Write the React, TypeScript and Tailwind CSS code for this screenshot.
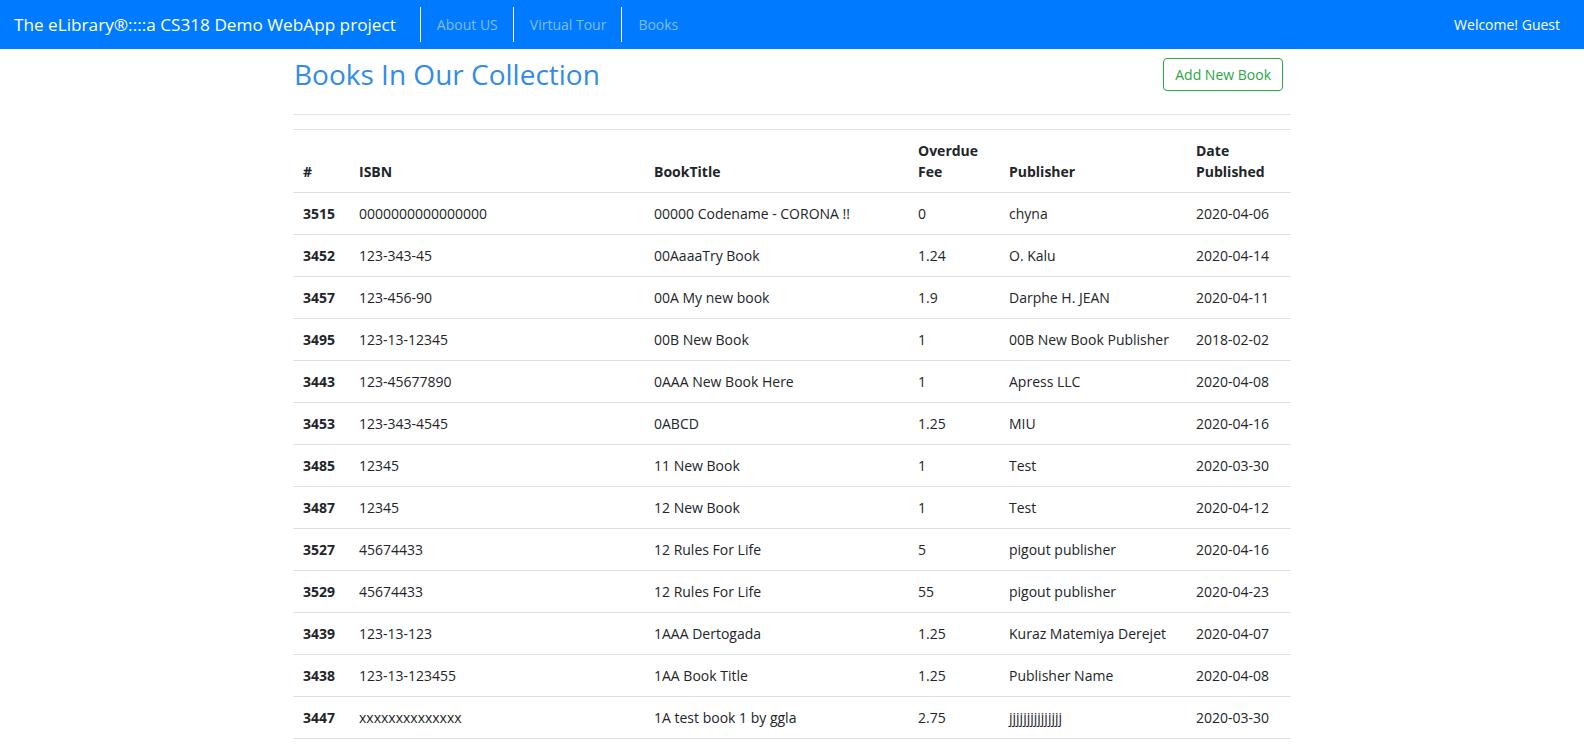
import React from "react";

type Book = {
  id: number;
  isbn: string;
  title: string;
  fee: string;
  publisher: string;
  date: string;
};

const books: Book[] = [
  { id: 3515, isbn: "0000000000000000", title: "00000 Codename - CORONA !!", fee: "0", publisher: "chyna", date: "2020-04-06" },
  { id: 3452, isbn: "123-343-45", title: "00AaaaTry Book", fee: "1.24", publisher: "O. Kalu", date: "2020-04-14" },
  { id: 3457, isbn: "123-456-90", title: "00A My new book", fee: "1.9", publisher: "Darphe H. JEAN", date: "2020-04-11" },
  { id: 3495, isbn: "123-13-12345", title: "00B New Book", fee: "1", publisher: "00B New Book Publisher", date: "2018-02-02" },
  { id: 3443, isbn: "123-45677890", title: "0AAA New Book Here", fee: "1", publisher: "Apress LLC", date: "2020-04-08" },
  { id: 3453, isbn: "123-343-4545", title: "0ABCD", fee: "1.25", publisher: "MIU", date: "2020-04-16" },
  { id: 3485, isbn: "12345", title: "11 New Book", fee: "1", publisher: "Test", date: "2020-03-30" },
  { id: 3487, isbn: "12345", title: "12 New Book", fee: "1", publisher: "Test", date: "2020-04-12" },
  { id: 3527, isbn: "45674433", title: "12 Rules For Life", fee: "5", publisher: "pigout publisher", date: "2020-04-16" },
  { id: 3529, isbn: "45674433", title: "12 Rules For Life", fee: "55", publisher: "pigout publisher", date: "2020-04-23" },
  { id: 3439, isbn: "123-13-123", title: "1AAA Dertogada", fee: "1.25", publisher: "Kuraz Matemiya Derejet", date: "2020-04-07" },
  { id: 3438, isbn: "123-13-123455", title: "1AA Book Title", fee: "1.25", publisher: "Publisher Name", date: "2020-04-08" },
  { id: 3447, isbn: "xxxxxxxxxxxxxx", title: "1A test book 1 by ggla", fee: "2.75", publisher: "jjjjjjjjjjjjjjj", date: "2020-03-30" },
];

const NavBar = () => {
  return (
    <nav className="flex items-center h-[49px] bg-[#007bff] pl-[14px] pr-[24px]">
      <a className="text-white text-[17.2px] leading-[30px] mr-[24px] whitespace-nowrap">
        The eLibrary®::::a CS318 Demo WebApp project
      </a>
      <ul className="flex items-center">
        {["About US", "Virtual Tour", "Books"].map((link) => (
          <li
            key={link}
            className="h-[35px] border-l border-white pl-[16px] pr-[15px] flex items-center"
          >
            <a className="text-[14px] text-[#80bdff]">{link}</a>
          </li>
        ))}
      </ul>
      <span className="ml-auto text-white text-[14px]">Welcome! Guest</span>
    </nav>
  );
};

const App = () => {
  return (
    <div
      className="h-[753px] overflow-hidden bg-white text-[#212529]"
      style={{ fontFamily: '"Open Sans", "Noto Sans", sans-serif' }}
    >
      <NavBar />
      <main className="w-[998px] mx-auto pt-[9px]">
        <div className="flex justify-between items-start">
          <h3 className="text-[28px] leading-[33.6px] font-medium text-[#318ce7] pl-[1px]">
            Books In Our Collection
          </h3>
          <button className="mr-[8px] h-[33px] px-[11px] text-[14px] leading-[21px] text-[#28a745] border border-[#28a745] rounded-[4px] bg-white">
            Add New Book
          </button>
        </div>
        <hr className="mt-[22px] border-t border-[#e5e5e5]" />
        <table className="mt-[14px] w-full table-fixed border-collapse text-[14px] leading-[21px]">
          <colgroup>
            <col className="w-[56px]" />
            <col className="w-[295px]" />
            <col className="w-[264px]" />
            <col className="w-[91px]" />
            <col className="w-[187px]" />
            <col className="w-[105px]" />
          </colgroup>
          <thead>
            <tr className="border-t border-b border-[#dee2e6]">
              {["#", "ISBN", "BookTitle", "Overdue Fee", "Publisher", "Date Published"].map((h) => (
                <th key={h} className="text-left align-bottom font-bold px-[10px] py-[10px]">
                  {h}
                </th>
              ))}
            </tr>
          </thead>
          <tbody>
            {books.map((b) => (
              <tr key={b.id} className="border-b border-[#dee2e6]">
                <th className="text-left font-bold px-[10px] py-[10px]">{b.id}</th>
                <td className="px-[10px] py-[10px] whitespace-nowrap">{b.isbn}</td>
                <td className="px-[10px] py-[10px] whitespace-nowrap">{b.title}</td>
                <td className="px-[10px] py-[10px]">{b.fee}</td>
                <td className="px-[10px] py-[10px] whitespace-nowrap">{b.publisher}</td>
                <td className="px-[10px] py-[10px]">{b.date}</td>
              </tr>
            ))}
          </tbody>
        </table>
      </main>
    </div>
  );
};

export default App;
